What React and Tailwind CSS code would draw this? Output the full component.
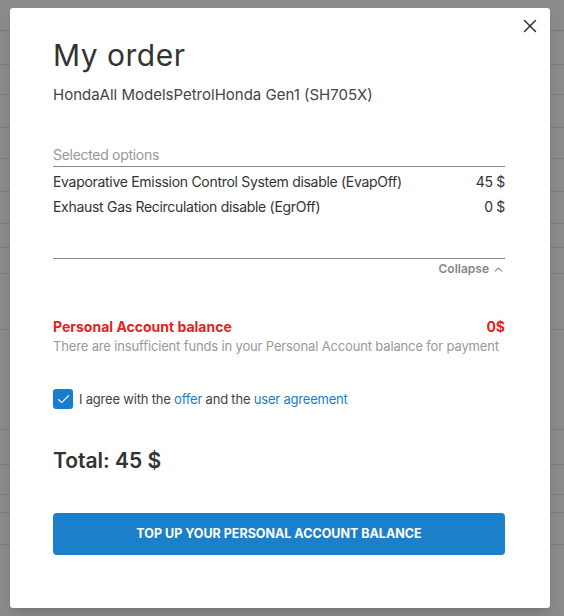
import React from 'react';
import { X, ChevronUp, Check } from 'lucide-react';

const bgRows = [31, 34, 30, 33, 31, 33, 32, 24, 26, 56, 100, 35, 30, 18, 32];

const App = () => {
  return (
    <div className="relative w-[564px] h-[616px] overflow-hidden bg-[#8a8a8a]" style={{ fontFamily: 'Inter, "Liberation Sans", sans-serif' }}>
      {/* Background page behind the overlay */}
      <div className="flex flex-col">
        {bgRows.map((h, i) => (
          <div key={i} className="border-b border-[#7b7b7b]" style={{ height: h }} />
        ))}
      </div>

      {/* Modal */}
      <div className="absolute left-[10px] top-[8px] w-[540px] h-[600px] bg-white rounded-[3px] shadow-lg pl-[43px] pr-[45px] pt-[29px]">
        <button className="absolute right-[9px] top-[7px] text-[#333]">
          <X className="w-[22px] h-[22px]" strokeWidth={1.6} />
        </button>

        <h2 className="text-[30px] leading-[36px] text-[#333] font-normal tracking-[0.5px]">My order</h2>
        <div className="mt-[12px] text-[15px] leading-[20px] text-[#444]">HondaAll ModelsPetrolHonda Gen1 (SH705X)</div>

        {/* Selected options */}
        <div className="mt-[40px] text-[14px] leading-[20px] text-[#999] border-b border-[#888] pb-[1px] tracking-[-0.3px]">Selected options</div>
        <div className="mt-[5px] flex flex-col gap-[5px] text-[14px] leading-[20px] text-[#333] tracking-[-0.3px]">
          <div className="flex justify-between">
            <span>Evaporative Emission Control System disable (EvapOff)</span>
            <span>45 $</span>
          </div>
          <div className="flex justify-between">
            <span>Exhaust Gas Recirculation disable (EgrOff)</span>
            <span>0 $</span>
          </div>
        </div>
        <div className="mt-[41px] border-t border-[#888]" />
        <div className="mt-[2px] flex justify-end items-center gap-[3px] text-[12px] leading-[16px] font-semibold text-[#888]">
          Collapse
          <ChevronUp className="w-[13px] h-[13px]" strokeWidth={2} />
        </div>

        {/* Balance */}
        <div className="mt-[41px] flex justify-between text-[14px] leading-[18px] font-bold text-[#e32222]">
          <span>Personal Account balance</span>
          <span>0$</span>
        </div>
        <div className="mt-[1px] text-[13px] leading-[18px] text-[#999] tracking-[-0.15px] whitespace-nowrap">There are insufficient funds in your Personal Account balance for payment</div>

        {/* Agreement */}
        <div className="mt-[34px] flex items-center gap-[6px] text-[13px] leading-[20px] text-[#444] tracking-[-0.2px]">
          <span className="flex items-center justify-center w-[20px] h-[20px] rounded-[3px] bg-[#1a7ccc]">
            <Check className="w-[15px] h-[15px] text-white" strokeWidth={1.75} />
          </span>
          <span>
            I agree with the <a className="text-[#1a7ccc]">offer</a> and the <a className="text-[#1a7ccc]">user agreement</a>
          </span>
        </div>

        <div className="mt-[38px] text-[21px] leading-[28px] font-semibold text-[#333]">Total: 45 $</div>

        <button className="mt-[38px] w-full h-[42px] rounded-[4px] bg-[#1b80cb] text-white text-[12.5px] font-bold uppercase">
          Top up your Personal Account balance
        </button>
      </div>
    </div>
  );
};

export default App;
